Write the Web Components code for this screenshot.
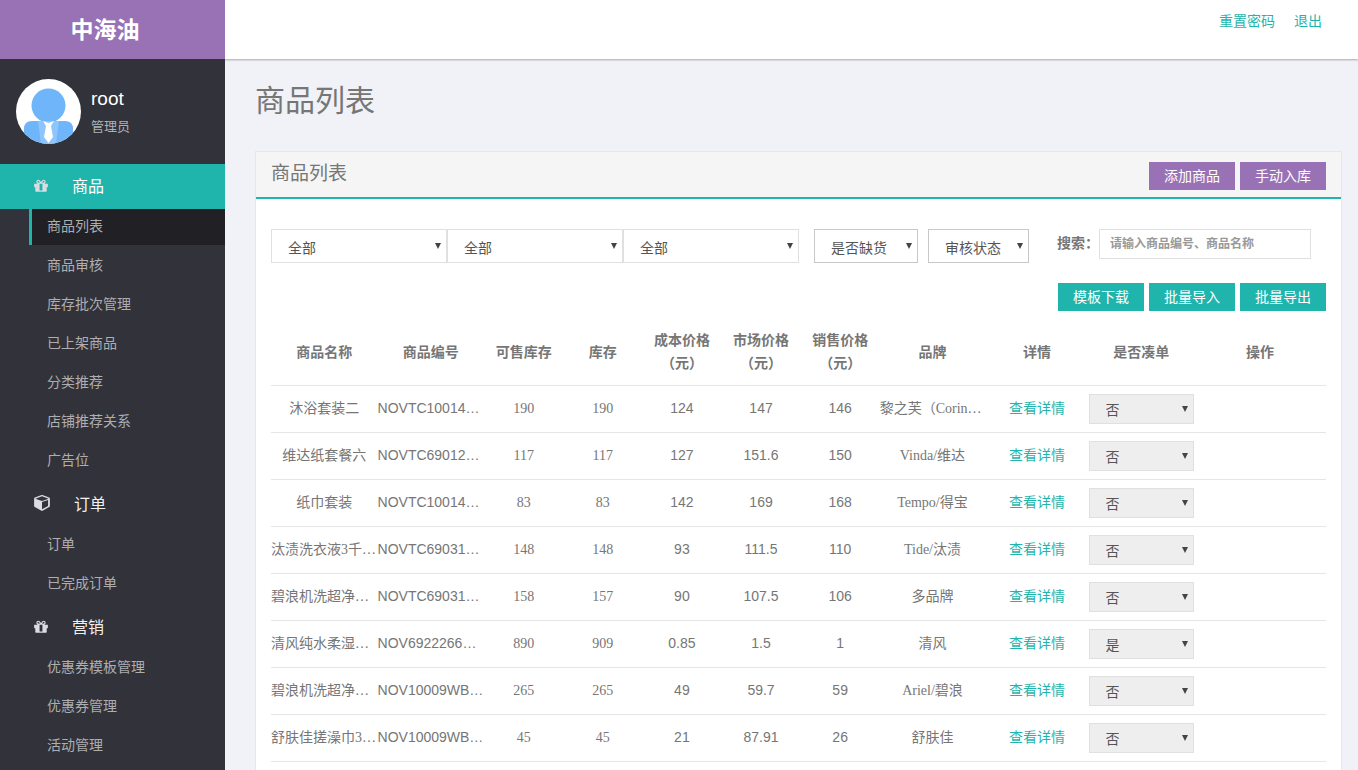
<!DOCTYPE html>
<html lang="zh-CN">
<head>
<meta charset="utf-8">
<title>商品列表</title>
<style>
    html, body { height: 100%; margin: 0; }
    body {
        --teal: #1fb5ad;
        --purple: #9972b5;
        --line: #e0e0e0;
        --sans: "Liberation Sans", "Noto Sans CJK SC", sans-serif;
        --serif: "Liberation Serif", "Noto Sans CJK SC", serif;
        background: #f1f2f7;
        color: #767676;
        font: 14px/20px var(--sans);
        overflow: hidden;
    }
</style>
</head>
<body>
<admin-app>
    <side-bar slot="side" brand="中海油">
        <user-card slot="user" name="root" role-name="管理员"></user-card>
        <menu-group icon="gift" label="商品" active>
            <menu-item active>商品列表</menu-item>
            <menu-item>商品审核</menu-item>
            <menu-item>库存批次管理</menu-item>
            <menu-item>已上架商品</menu-item>
            <menu-item>分类推荐</menu-item>
            <menu-item>店铺推荐关系</menu-item>
            <menu-item>广告位</menu-item>
        </menu-group>
        <menu-group icon="cube" label="订单">
            <menu-item>订单</menu-item>
            <menu-item>已完成订单</menu-item>
        </menu-group>
        <menu-group icon="gift" label="营销">
            <menu-item>优惠券模板管理</menu-item>
            <menu-item>优惠券管理</menu-item>
            <menu-item>活动管理</menu-item>
        </menu-group>
    </side-bar>
    <top-bar slot="top"></top-bar>
    <page-panel heading="商品列表">
        <ui-button slot="tools" kind="purple">添加商品</ui-button>
        <ui-button slot="tools" kind="purple">手动入库</ui-button>
        <filter-bar></filter-bar>
        <button-row>
            <ui-button>模板下载</ui-button>
            <ui-button>批量导入</ui-button>
            <ui-button>批量导出</ui-button>
        </button-row>
        <goods-table></goods-table>
    </page-panel>
</admin-app>

<script>
'use strict';

const icons = {
    gift: `<svg width="14" height="16" viewBox="0 0 1536 1792" aria-hidden="true"><path fill="currentColor" fill-rule="evenodd" d="M928 1356v-716h-320v716q0 25 18 38.500t46 13.500h192q28 0 46-13.500t18-38.500zM472 512h195l-126-161q-26-31-69-31-40 0-68 28t-28 68 28 68 68 28zM1160 416q0-40-28-68t-68-28q-43 0-69 31l-125 161h194q40 0 68-28t28-68zM1536 672v320q0 14-9 23t-23 9h-96v416q0 40-28 68t-68 28h-1088q-40 0-68-28t-28-68v-416h-96q-14 0-23-9t-9-23v-320q0-14 9-23t23-9h440q-93 0-158.500-65.500t-65.500-158.500 65.500-158.500 158.500-65.500q107 0 168 77l128 165 128-165q61-77 168-77 93 0 158.500 65.500t65.500 158.500-65.500 158.500-158.500 65.500h440q14 0 23 9t9 23z"/></svg>`,
    cube: `<svg width="16" height="17" viewBox="0 0 1664 1792" aria-hidden="true"><path fill="currentColor" fill-rule="evenodd" d="M832 1502l640-349v-636l-640 233v752zM832 638l698-254-698-254-698 254zM1664 384v768q0 35-18 65t-49 47l-704 384q-28 16-61 16t-61-16l-704-384q-31-17-49-47t-18-65v-768q0-40 23-73t61-47l704-256q22-8 44-8t44 8l704 256q38 14 61 47t23 73z"/></svg>`
};

// every element puts its markup in an open shadow root
class BaseElement extends HTMLElement {
    constructor() {
        super();
        this.attachShadow({ mode: 'open' });
    }
    connectedCallback() {
        this.shadowRoot.innerHTML = this.render();
    }
    attr(name) {
        return this.getAttribute(name) || '';
    }
}

class AdminApp extends BaseElement {
    render() {
        return `<style>
            :host { display: flex; height: 100vh; }
            .side { flex: none; width: 225px; overflow: hidden; position: relative; z-index: 1; }
            .content { flex: 1; min-width: 0; display: flex; flex-direction: column; }
            main { flex: 1; min-height: 0; overflow-y: auto; scrollbar-width: none; padding: 27px 16px 0 30px; }
        </style>
        <div class="side"><slot name="side"></slot></div>
        <div class="content"><slot name="top"></slot><main><slot></slot></main></div>`;
    }
}

class SideBar extends BaseElement {
    render() {
        return `<style>
            :host { display: block; min-height: 100%; background: #32323a; }
            .brand { background: var(--purple); color: #fff; height: 59px; line-height: 60px; padding-right: 15px; text-align: center; font-size: 23px; font-weight: bold; }
        </style>
        <div class="brand">${this.attr('brand')}</div>
        <slot name="user"></slot>
        <nav><slot></slot></nav>`;
    }
}

class UserCard extends BaseElement {
    render() {
        return `<style>
            :host { display: flex; align-items: center; gap: 10px; padding: 20px 16px; }
            svg { flex: none; }
            .info { padding-top: 2px; }
            .name { color: #fff; font-size: 19px; line-height: 28px; }
            .role { color: #aeb2b7; font-size: 13px; line-height: 28px; }
        </style>
        <svg width="65" height="65" viewBox="0 0 65 65" aria-hidden="true">
            <clipPath id="round"><circle cx="32.500" cy="32.500" r="32.500"/></clipPath>
            <g clip-path="url(#round)">
                <rect width="65" height="65" fill="#fff"/>
                <circle cx="32.500" cy="26.500" r="17" fill="#6fb5fa"/>
                <path fill="#6fb5fa" d="M8 65V50q0-8 8-8h33q8 0 8 8v15z"/>
                <path fill="#8ec5fc" d="M22 42h21l-3 23H25z"/>
                <path fill="#fff" d="M27 42l5.500 2 5.500-2-3 5 2 11-4.500 6-4.500-6 2-11z"/>
            </g>
        </svg>
        <div class="info">
            <div class="name">${this.attr('name')}</div>
            <div class="role">${this.attr('role-name')}</div>
        </div>`;
    }
}

class MenuGroup extends BaseElement {
    render() {
        return `<style>
            :host { display: block; }
            a { display: flex; align-items: center; gap: 24px; height: 45px; padding-left: 34px; color: #d9dde2; font-size: 16px; text-decoration: none; }
            svg { margin-bottom: 2px; }
            span { color: #f0f0f0; }
            :host([active]) a { background: var(--teal); }
            :host([active]) span { color: #fff; }
        </style>
        <a href="#">${icons[this.attr('icon')]}<span>${this.attr('label')}</span></a>
        <slot></slot>`;
    }
}

class MenuItem extends BaseElement {
    render() {
        return `<style>
            :host { display: block; margin: 0 0 3px 29px; }
            a { display: block; border-left: 3px solid transparent; padding: 0 0 2px 15px; line-height: 34px; color: #aeaeb0; text-decoration: none; }
            :host([active]) a { border-color: var(--teal); background: #202025; }
        </style>
        <a href="#"><slot></slot></a>`;
    }
}

class TopBar extends BaseElement {
    render() {
        return `<style>
            :host { display: flex; justify-content: flex-end; gap: 19px; box-sizing: border-box; height: 59px; padding: 11px 36px; background: #fff; box-shadow: 0 1px 2px rgba(0, 0, 0, .3); position: relative; }
            a { color: var(--teal); text-decoration: none; }
        </style>
        <a href="#">重置密码</a><a href="#">退出</a>`;
    }
}

class PagePanel extends BaseElement {
    render() {
        return `<style>
            :host { display: block; }
            h1 { margin: 0 0 35px; font-size: 30px; line-height: 30px; font-weight: normal; }
            section { border: 1px solid #e6e7ec; background: #fff; }
            header { display: flex; justify-content: space-between; align-items: flex-start; padding: 10px 15px 7px; background: #f5f5f5; border-bottom: 2px solid var(--teal); }
            h2 { margin: 0; font-size: 19px; line-height: 24px; font-weight: normal; }
            .tools { display: flex; gap: 5px; }
            .body { padding: 30px 15px; }
        </style>
        <h1>${this.attr('heading')}</h1>
        <section>
            <header><h2>${this.attr('heading')}</h2><div class="tools"><slot name="tools"></slot></div></header>
            <div class="body"><slot></slot></div>
        </section>`;
    }
}

class UiButton extends BaseElement {
    render() {
        return `<style>
            :host { display: block; }
            button { display: block; border: 0; margin: 0; height: 28px; padding: 0 15px; background: var(--teal); color: #fff; font: inherit; }
            :host([kind=purple]) button { background: var(--purple); }
        </style>
        <button type="button"><slot></slot></button>`;
    }
}

class ButtonRow extends BaseElement {
    render() {
        return `<style>
            :host { display: flex; justify-content: flex-end; gap: 5px; margin-top: 20px; }
        </style>
        <slot></slot>`;
    }
}

class UiSelect extends BaseElement {
    render() {
        const options = this.attr('options').split(',').map(o => `<option>${o}</option>`).join('');
        return `<style>
            :host { display: grid; align-items: center; height: 34px; --edge: var(--line); }
            :host([dark]) { --edge: #c8c8c8; }
            :host([small]) { height: 30px; }
            select, svg { grid-area: 1 / 1; }
            select { appearance: none; box-sizing: border-box; width: 100%; height: 100%; margin: 0; border: 1px solid var(--edge); border-radius: 0; padding: 4px 16px 0; background: #fff; color: #555; font: inherit; opacity: 1; }
            :host([small]) select { background: #eee; padding-top: 2px; }
            svg { justify-self: end; margin-right: 6px; pointer-events: none; }
        </style>
        <select aria-label="${this.attr('label')}" ${this.hasAttribute('small') ? 'disabled' : ''}>${options}</select>
        <svg width="6" height="7" viewBox="0 0 6 7" aria-hidden="true"><path d="M0 0h6L3 6z" fill="#444"/></svg>`;
    }
}

class FilterBar extends BaseElement {
    render() {
        return `<style>
            :host { display: flex; align-items: flex-start; }
            .wide { width: 176px; }
            .stock { width: 104px; margin: 0 10px 0 15px; }
            .audit { width: 101px; }
            .search { display: flex; margin: 0 15px 0 auto; }
            label { font-weight: bold; line-height: 28px; }
            input { box-sizing: border-box; width: 212px; height: 30px; margin: 0; border: 1px solid var(--line); padding: 0 10px; font: bold 12px var(--sans); color: #767676; }
            input::placeholder { color: #999; }
        </style>
        <ui-select class="wide" label="一级分类" options="全部"></ui-select>
        <ui-select class="wide" label="二级分类" options="全部"></ui-select>
        <ui-select class="wide" label="三级分类" options="全部"></ui-select>
        <ui-select class="stock" dark label="是否缺货" options="是否缺货,是,否"></ui-select>
        <ui-select class="audit" dark label="审核状态" options="审核状态"></ui-select>
        <div class="search">
            <label for="keyword">搜索：</label>
            <input id="keyword" type="text" placeholder="请输入商品编号、商品名称">
        </div>`;
    }
}

const goods = [
    ['沐浴套装二', 'NOVTC10014…', 190, 190, '124', '147', '146', '黎之芙（Corin…', '否'],
    ['维达纸套餐六', 'NOVTC69012…', 117, 117, '127', '151.6', '150', 'Vinda/维达', '否'],
    ['纸巾套装', 'NOVTC10014…', 83, 83, '142', '169', '168', 'Tempo/得宝', '否'],
    ['汰渍洗衣液3千…', 'NOVTC69031…', 148, 148, '93', '111.5', '110', 'Tide/汰渍', '否'],
    ['碧浪机洗超净…', 'NOVTC69031…', 158, 157, '90', '107.5', '106', '多品牌', '否'],
    ['清风纯水柔湿…', 'NOV6922266…', 890, 909, '0.85', '1.5', '1', '清风', '是'],
    ['碧浪机洗超净…', 'NOV10009WB…', 265, 265, '49', '59.7', '59', 'Ariel/碧浪', '否'],
    ['舒肤佳搓澡巾3…', 'NOV10009WB…', 45, 45, '21', '87.91', '26', '舒肤佳', '否']
];

class GoodsTable extends BaseElement {
    // shortened texts start at the left edge of the cell
    cut(text) {
        return text.endsWith('…') ? 'cut' : '';
    }
    row(g) {
        const [name, code, usable, stock, cost, market, price, brand, bundle] = g;
        const others = bundle === '否' ? '是' : '否';
        return `<tr>
            <td class="serif ${this.cut(name)}">${name}</td>
            <td class="${this.cut(code)}">${code}</td>
            <td class="serif">${usable}</td>
            <td class="serif">${stock}</td>
            <td>${cost}</td>
            <td>${market}</td>
            <td>${price}</td>
            <td class="serif ${this.cut(brand)}">${brand}</td>
            <td><a href="#">查看详情</a></td>
            <td class="pick"><ui-select small label="是否凑单" options="${bundle},${others}"></ui-select></td>
            <td></td>
        </tr>`;
    }
    render() {
        return `<style>
            :host { display: block; margin-top: 10px; }
            table { width: 100%; table-layout: fixed; border-collapse: separate; border-spacing: 0; text-align: center; }
            col { width: 10%; }
            col.text { width: 10%; }
            col.num { width: 7.5%; }
            col.last { width: 12.5%; }
            th { height: 62px; padding: 0 0 2px; line-height: 23px; vertical-align: middle; }
            td { height: 30px; padding: 7px 0 9px; white-space: nowrap; }
            th, td { border-bottom: 1px solid #e6e6e6; }
            .serif { font-family: var(--serif); }
            .serif, .pick { padding: 8px 0; }
            .cut { text-align: left; }
            a { color: var(--teal); text-decoration: none; }
            col.text { width: 10.1%; }
            col.brand { width: 10%; }
            col.link { width: 9.8%; }
            col.last { width: auto; }
        </style>
        <table>
            <colgroup>
                <col class="text"><col class="text">
                <col class="num"><col class="num"><col class="num"><col class="num"><col class="num">
                <col class="brand"><col class="link"><col><col class="last">
            </colgroup>
            <thead><tr>
                <th>商品名称</th><th>商品编号</th><th>可售库存</th><th>库存</th>
                <th>成本价格<br>（元）</th><th>市场价格<br>（元）</th><th>销售价格<br>（元）</th>
                <th>品牌</th><th>详情</th><th>是否凑单</th><th>操作</th>
            </tr></thead>
            <tbody>${goods.map(g => this.row(g)).join('')}</tbody>
        </table>`;
    }
}

customElements.define('admin-app', AdminApp);
customElements.define('side-bar', SideBar);
customElements.define('user-card', UserCard);
customElements.define('menu-group', MenuGroup);
customElements.define('menu-item', MenuItem);
customElements.define('top-bar', TopBar);
customElements.define('page-panel', PagePanel);
customElements.define('ui-button', UiButton);
customElements.define('button-row', ButtonRow);
customElements.define('ui-select', UiSelect);
customElements.define('filter-bar', FilterBar);
customElements.define('goods-table', GoodsTable);
</script>
</body>
</html>
